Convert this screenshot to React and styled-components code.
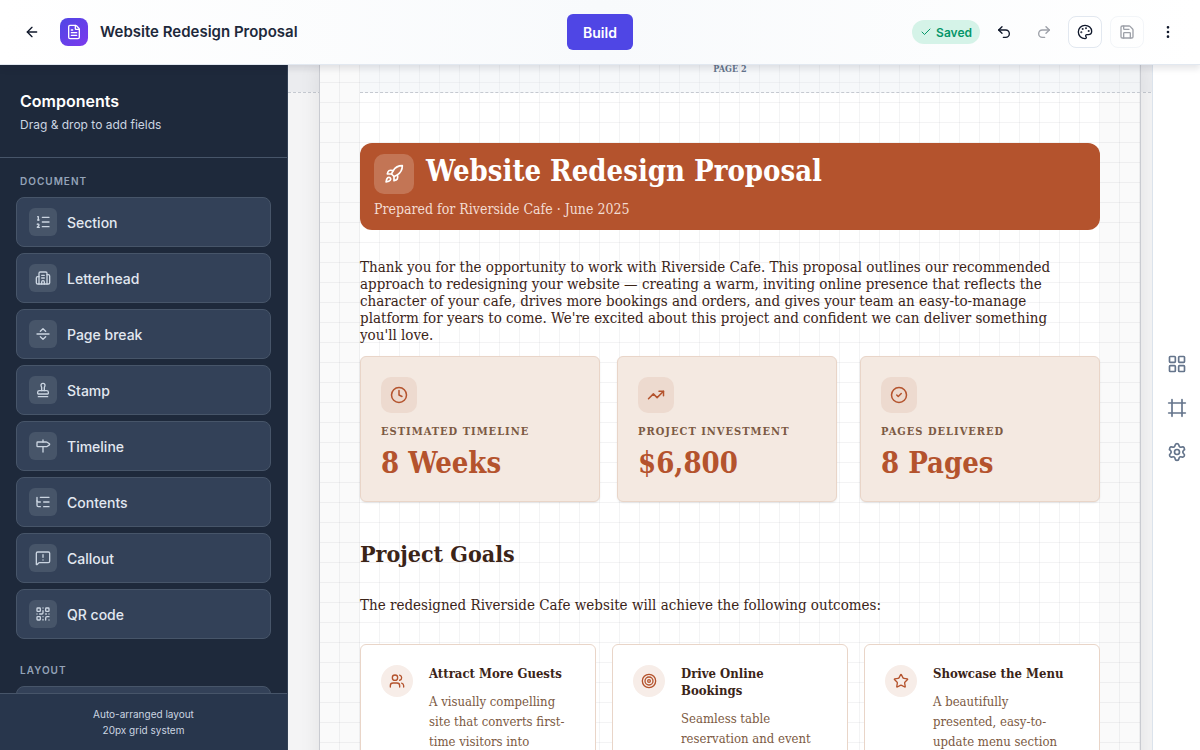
import React from 'react';
import styled, { createGlobalStyle } from 'styled-components';
import {
  ArrowLeft,
  Building2,
  Check,
  CircleCheck,
  Clock,
  EllipsisVertical,
  FileText,
  Frame,
  LayoutGrid,
  ListOrdered,
  ListTree,
  MessageSquareWarning,
  Milestone,
  Palette,
  QrCode,
  Redo2,
  Rocket,
  Save,
  SeparatorHorizontal,
  Settings,
  Stamp,
  Star,
  Table,
  Target,
  TrendingUp,
  Undo2,
  Users,
} from 'lucide-react';

const serif = '"DejaVu Serif Condensed", "DejaVu Serif", serif';

const GlobalStyle = createGlobalStyle`
  * {
    box-sizing: border-box;
  }
  body {
    margin: 0;
    font-family: Inter, "Liberation Sans", sans-serif;
    color: #1e293b;
  }
  h1, h2, h3, p, ul, dl, dt, dd {
    margin: 0;
    padding: 0;
  }
  button {
    font-family: inherit;
    cursor: pointer;
  }
`;

const Layout = styled.div`
  display: flex;
  flex-direction: column;
  height: 100vh;
  overflow: hidden;
`;

const TopBar = styled.header`
  position: relative;
  z-index: 2;
  flex: none;
  display: grid;
  grid-template-columns: 1fr auto 1fr;
  align-items: center;
  height: 65px;
  padding: 0 16px;
  border-bottom: 1px solid #e2e8f0;
  background: linear-gradient(90deg, #ffffff, #f8fafc 50%, #ffffff);
  box-shadow: 0 4px 6px rgba(15, 23, 42, 0.1);
`;

const DocInfo = styled.div`
  display: flex;
  align-items: center;
  gap: 12px;
  h1 {
    font-size: 15px;
    line-height: 24px;
    font-weight: 600;
  }
`;

const Logo = styled.span`
  display: flex;
  align-items: center;
  justify-content: center;
  width: 28px;
  height: 28px;
  border-radius: 8px;
  background: linear-gradient(135deg, #4f46e5, #7c3aed);
  color: white;
`;

const Actions = styled.div`
  display: flex;
  align-items: center;
  justify-content: flex-end;
`;

const IconButton = styled.button`
  display: flex;
  align-items: center;
  justify-content: center;
  width: ${({ $wide }) => ($wide ? '34px' : '32px')};
  height: 32px;
  padding: 0;
  border: 1px solid ${({ $bordered }) => ($bordered ? '#e2e8f0' : 'transparent')};
  border-radius: 8px;
  background: ${({ $bordered }) => ($bordered ? 'white' : 'transparent')};
  color: #0f172a;
  &:disabled {
    opacity: 0.4;
    cursor: default;
  }
`;

const History = styled.div`
  display: flex;
  gap: 8px;
  margin: 0 8px;
`;

const FileActions = styled.div`
  display: flex;
  align-items: center;
  gap: 8px;
`;

const BuildButton = styled.button`
  height: 36px;
  padding: 0 16px;
  border: none;
  border-radius: 6px;
  background: #4f46e5;
  color: white;
  font-size: 14px;
  font-weight: 600;
`;

const SavedBadge = styled.span`
  display: flex;
  align-items: center;
  gap: 4px;
  height: 24px;
  padding: 0 8px;
  border-radius: 12px;
  background: #d5f3e8;
  color: #059669;
  font-size: 12px;
  font-weight: 600;
`;

const Workspace = styled.div`
  display: flex;
  flex: 1;
  min-height: 0;
`;

const Sidebar = styled.aside`
  display: flex;
  flex-direction: column;
  flex: none;
  width: 288px;
  border-right: 1px solid #334155;
  background: #1e293b;
`;

const SidebarHeader = styled.div`
  padding: 24px 20px;
  border-bottom: 1px solid #475569;
  h2 {
    color: white;
    font-size: 16px;
    line-height: 24px;
    font-weight: 600;
  }
  p {
    margin-top: 4px;
    color: #cbd5e1;
    font-size: 12px;
    line-height: 16px;
  }
`;

const Palettes = styled.div`
  flex: 1;
  min-height: 0;
  overflow: hidden;
  padding: 16px;
`;

const GroupLabel = styled.h3`
  padding: 0 4px;
  margin-bottom: 8px;
  color: #94a3b8;
  font-size: 10px;
  line-height: 15px;
  font-weight: 600;
  letter-spacing: 1px;
  text-transform: uppercase;
`;

const Group = styled.section`
  margin-bottom: 24px;
  ul {
    display: flex;
    flex-direction: column;
    gap: 6px;
    list-style: none;
  }
`;

const ComponentButton = styled.button`
  display: flex;
  align-items: center;
  gap: 10px;
  width: 100%;
  height: 50px;
  padding: 0 12px;
  border: 1px solid #475569;
  border-radius: 8px;
  background: #334158;
  color: #e2e8f0;
  font-size: 14px;
  font-weight: 500;
  span {
    display: flex;
    align-items: center;
    justify-content: center;
    width: 28px;
    height: 28px;
    border-radius: 6px;
    background: #475569;
    color: #cbd5e1;
  }
`;

const SidebarFooter = styled.footer`
  padding: 12px;
  border-top: 1px solid #475569;
  background: #28364c;
  color: #cbd5e1;
  font-size: 10px;
  line-height: 16px;
  text-align: center;
`;

// the gap between two sheets runs across the canvas as a tinted, dashed band
const Canvas = styled.main`
  display: flex;
  flex-direction: column;
  flex: 1;
  min-width: 0;
  overflow: hidden;
  background:
    repeating-linear-gradient(90deg, #c5c9d0 0 3px, transparent 3px 5px) 0 27px / 100% 1px no-repeat,
    linear-gradient(#ebecef 27px, #f4f4f5 27px);
`;

const Page = styled.article`
  display: flex;
  flex-direction: column;
  flex: 1 0 auto;
  margin: 0 11px 0 31px;
  border: solid #c9cbd1;
  border-width: 0 1px;
  background-color: #ffffff;
  background-image:
    linear-gradient(90deg, transparent 19px, rgba(15, 23, 42, 0.05) 19px),
    linear-gradient(transparent 19px, rgba(15, 23, 42, 0.05) 19px),
    linear-gradient(90deg, #fafafa 40px, transparent 40px, transparent calc(100% - 40px), #fafafa calc(100% - 40px));
  background-size: 20px 20px, 20px 20px, 100% 100%;
  background-position: 0 0, 0 -2px, 0 0;
  box-shadow: 0 0 20px rgba(15, 15, 30, 0.08);
  font-family: ${serif};
  color: #3b2418;
`;

const PageBreak = styled.div`
  height: 28px;
  margin-left: 40px;
  padding-right: 40px;
  border-bottom: 1px dashed #c5c9d0;
  background: rgba(226, 232, 240, 0.3);
  color: #64748b;
  font-size: 9px;
  line-height: 8px;
  font-weight: 600;
  text-align: center;
`;

const PageBody = styled.div`
  padding: 50px 40px 0;
`;

const Banner = styled.div`
  padding: 11px 14px;
  border-radius: 12px;
  background: #b4532d;
  color: white;
  p {
    margin-top: 5px;
    color: #f3dcd2;
    font-size: 14px;
    line-height: 20px;
  }
`;

const BannerTitle = styled.div`
  display: flex;
  align-items: center;
  gap: 12px;
  height: 40px;
  h2 {
    padding-bottom: 6px;
    font-size: 29px;
    line-height: 34px;
  }
`;

const BannerIcon = styled.span`
  display: flex;
  align-items: center;
  justify-content: center;
  width: 40px;
  height: 40px;
  border-radius: 10px;
  background: #c37555;
`;

const Text = styled.p`
  font-size: 15px;
  line-height: 17px;
`;

const Intro = styled(Text)`
  margin: 29px 0 12px;
  padding-right: 20px;
`;

const Stats = styled.dl`
  display: grid;
  grid-template-columns: 240fr 17fr 220fr 23fr 240fr;
  > div:nth-child(2) {
    grid-column: 3;
  }
  > div:nth-child(3) {
    grid-column: 5;
  }
`;

const StatCard = styled.div`
  height: 146px;
  padding: 20px;
  border: 1px solid #e9d5c8;
  border-radius: 6px;
  background: #f4e9e1;
  box-shadow: 0 1px 2px rgba(15, 23, 42, 0.08);
  dt {
    margin-top: 10px;
    color: #7c5a43;
    font-size: 11px;
    line-height: 18px;
    font-weight: 600;
    letter-spacing: 1px;
    text-transform: uppercase;
    white-space: nowrap;
  }
  dd {
    margin-top: 4px;
    color: #b4532d;
    font-size: 29px;
    line-height: 36px;
    font-weight: 700;
  }
`;

const StatIcon = styled.span`
  display: flex;
  align-items: center;
  justify-content: center;
  width: 36px;
  height: 36px;
  border-radius: 10px;
  background: #eddacf;
  color: #b4532d;
`;

const SectionTitle = styled.h2`
  margin: 36px 0 27px;
  font-size: 23px;
  line-height: 32px;
  font-weight: 600;
`;

const Goals = styled.div`
  display: grid;
  grid-template-columns: repeat(3, 1fr);
  gap: 16px;
  margin-top: 30px;
`;

const GoalCard = styled.section`
  display: flex;
  align-items: flex-start;
  gap: 16px;
  height: 180px;
  padding: 20px 28px 20px 20px;
  border: 1px solid #e9d5c8;
  border-radius: 6px;
  background: white;
  h3 {
    font-size: 13px;
    line-height: 17px;
    font-weight: 600;
  }
  p {
    margin-top: 10px;
    color: #7c5a43;
    font-size: 13px;
    line-height: 20px;
  }
`;

const GoalIcon = styled.span`
  flex: none;
  display: flex;
  align-items: center;
  justify-content: center;
  width: 32px;
  height: 32px;
  border-radius: 50%;
  background: #f7ede8;
  color: #b4532d;
`;

const Rail = styled.nav`
  flex: none;
  display: flex;
  flex-direction: column;
  align-items: center;
  justify-content: center;
  gap: 12px;
  width: 48px;
  border-left: 1px solid #dbe3ec;
  background: white;
  button {
    color: #64748b;
  }
`;

const groups = [
  {
    label: 'Document',
    items: [
      { icon: ListOrdered, name: 'Section' },
      { icon: Building2, name: 'Letterhead' },
      { icon: SeparatorHorizontal, name: 'Page break' },
      { icon: Stamp, name: 'Stamp' },
      { icon: Milestone, name: 'Timeline' },
      { icon: ListTree, name: 'Contents' },
      { icon: MessageSquareWarning, name: 'Callout' },
      { icon: QrCode, name: 'QR code' },
    ],
  },
  { label: 'Layout', items: [{ icon: Table, name: '' }] },
];

const stats = [
  { icon: Clock, label: 'Estimated Timeline', value: '8 Weeks' },
  { icon: TrendingUp, label: 'Project Investment', value: '$6,800' },
  { icon: CircleCheck, label: 'Pages Delivered', value: '8 Pages' },
];

const goals = [
  { icon: Users, title: 'Attract More Guests', text: 'A visually compelling site that converts first-time visitors into' },
  { icon: Target, title: 'Drive Online Bookings', text: 'Seamless table reservation and event' },
  { icon: Star, title: 'Showcase the Menu', text: 'A beautifully presented, easy-to-update menu section' },
];

const App = () => {
  return (
    <Layout>
      <GlobalStyle />
      <TopBar>
        <DocInfo>
          <IconButton aria-label="Back"><ArrowLeft size={16} /></IconButton>
          <Logo><FileText size={16} /></Logo>
          <h1>Website Redesign Proposal</h1>
        </DocInfo>
        <BuildButton>Build</BuildButton>
        <Actions>
          <SavedBadge><Check size={12} />Saved</SavedBadge>
          <History>
            <IconButton aria-label="Undo"><Undo2 size={16} /></IconButton>
            <IconButton aria-label="Redo" disabled><Redo2 size={16} /></IconButton>
          </History>
          <FileActions>
            <IconButton $wide $bordered aria-label="Theme"><Palette size={16} /></IconButton>
            <IconButton $wide $bordered aria-label="Save" disabled><Save size={16} /></IconButton>
            <IconButton aria-label="More"><EllipsisVertical size={16} /></IconButton>
          </FileActions>
        </Actions>
      </TopBar>
      <Workspace>
        <Sidebar>
          <SidebarHeader>
            <h2>Components</h2>
            <p>Drag &amp; drop to add fields</p>
          </SidebarHeader>
          <Palettes>
            {groups.map(({ label, items }) => (
              <Group key={label}>
                <GroupLabel>{label}</GroupLabel>
                <ul>
                  {items.map(({ icon: Icon, name }) => (
                    <li key={name}>
                      <ComponentButton>
                        <span><Icon size={16} /></span>
                        {name}
                      </ComponentButton>
                    </li>
                  ))}
                </ul>
              </Group>
            ))}
          </Palettes>
          <SidebarFooter>
            <p>Auto-arranged layout</p>
            <p>20px grid system</p>
          </SidebarFooter>
        </Sidebar>
        <Canvas>
          <Page>
            <PageBreak>PAGE 2</PageBreak>
            <PageBody>
              <Banner>
                <BannerTitle>
                  <BannerIcon><Rocket size={20} /></BannerIcon>
                  <h2>Website Redesign Proposal</h2>
                </BannerTitle>
                <p>Prepared for Riverside Cafe · June 2025</p>
              </Banner>
              <Intro>
                Thank you for the opportunity to work with Riverside Cafe. This proposal outlines our recommended
                approach to redesigning your website — creating a warm, inviting online presence that reflects the
                character of your cafe, drives more bookings and orders, and gives your team an easy-to-manage
                platform for years to come. We're excited about this project and confident we can deliver something
                you'll love.
              </Intro>
              <Stats>
                {stats.map(({ icon: Icon, label, value }) => (
                  <StatCard key={label}>
                    <StatIcon><Icon size={18} /></StatIcon>
                    <dt>{label}</dt>
                    <dd>{value}</dd>
                  </StatCard>
                ))}
              </Stats>
              <SectionTitle>Project Goals</SectionTitle>
              <Text>The redesigned Riverside Cafe website will achieve the following outcomes:</Text>
              <Goals>
                {goals.map(({ icon: Icon, title, text }) => (
                  <GoalCard key={title}>
                    <GoalIcon><Icon size={16} /></GoalIcon>
                    <div>
                      <h3>{title}</h3>
                      <p>{text}</p>
                    </div>
                  </GoalCard>
                ))}
              </Goals>
            </PageBody>
          </Page>
        </Canvas>
        <Rail>
          <IconButton aria-label="Blocks"><LayoutGrid size={20} /></IconButton>
          <IconButton aria-label="Frame"><Frame size={20} /></IconButton>
          <IconButton aria-label="Settings"><Settings size={20} /></IconButton>
        </Rail>
      </Workspace>
    </Layout>
  );
};

export default App;
